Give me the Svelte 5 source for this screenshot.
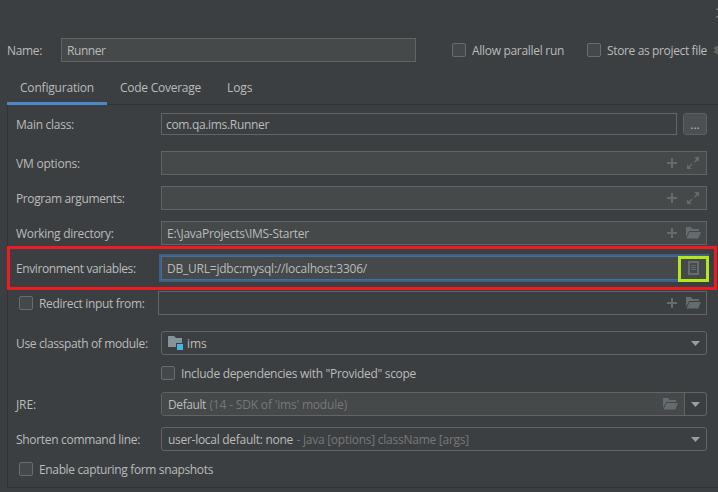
<script>
  // Tracks a label so that it takes exactly the given advance width.
  function fit(node, width) {
    const natural = node.getBoundingClientRect().width;
    node.style.letterSpacing = `${(width - natural) / node.textContent.length}px`;
  }
</script>

{#snippet t(text, width, cls = '')}<span class="t {cls}" use:fit={width}>{text}</span>{/snippet}

{#snippet plus()}
  <svg class="plus" width="10" height="10" viewBox="0 0 10 10"><path d="M4 0h2v4h4v2H6v4H4V6H0V4h4z" /></svg>
{/snippet}

{#snippet expand()}
  <svg class="expand" width="12" height="12" viewBox="0 0 12 12"><path d="M7.2 0H12v4.8L10.4 3.2 7.8 5.8l-.9-.9L9.3 2.1zM0 7.2l2.1 2.1L4.6 6.6l.9.9-2.6 2.9L4.8 12H0z" /></svg>
{/snippet}

{#snippet folder()}
  <svg class="folder" width="15" height="12" viewBox="0 0 15 12"><path d="M0 0h5l1.5 2H13v2H3.2L0 10z" /><path d="M3.5 5H15l-2.7 6.5H.5z" /></svg>
{/snippet}

{#snippet arrow()}
  <svg class="arrow" width="9" height="5" viewBox="0 0 9 5"><path d="M0 0h9L4.5 5z" /></svg>
{/snippet}

<div class="window">
  <svg class="close" width="2" height="10" viewBox="0 0 2 10"><path d="M.3 .5L2 2.3M.3 9.5L2 7.7" /></svg>

  <div class="head">
    <div class="name">{@render t('Name:', 35)}</div>
    <div class="field name-field">{@render t('Runner', 38.5)}</div>
    <div class="check allow"><i></i>{@render t('Allow parallel run', 92)}</div>
    <div class="check store"><i></i>{@render t('Store as project file', 100)}</div>
    <svg class="gear" width="4" height="8" viewBox="0 0 4 8"><path d="M0 1h2V0h2v8H2V7H0V5h1V3H0z" /></svg>
  </div>

  <div class="tabs">
    <div class="tab active">{@render t('Configuration', 74)}</div>
    <div class="tab">{@render t('Code Coverage', 81)}</div>
    <div class="tab">{@render t('Logs', 25.5)}</div>
  </div>

  <div class="panel">
    <div class="row main">
      <div class="label">{@render t('Main class:', 58)}</div>
      <div class="field dark">{@render t('com.qa.ims.Runner', 103)}</div>
      <div class="more"><span>...</span></div>
    </div>
    <div class="row first">
      <div class="label">{@render t('VM options:', 64)}</div>
      <div class="field">{@render plus()}{@render expand()}</div>
    </div>
    <div class="row">
      <div class="label">{@render t('Program arguments:', 108.5)}</div>
      <div class="field">{@render plus()}{@render expand()}</div>
    </div>
    <div class="row">
      <div class="label">{@render t('Working directory:', 97.5)}</div>
      <div class="field">{@render t('E:\\JavaProjects\\IMS-Starter', 142)}{@render plus()}{@render folder()}</div>
    </div>
    <div class="row env">
      <div class="label">{@render t('Environment variables:', 119.7)}</div>
      <div class="field focus">
        {@render t('DB_URL=jdbc:mysql://localhost:3306/', 200)}
        <svg class="list" width="11" height="14" viewBox="0 0 11 14"><path fill-rule="evenodd" d="M0 0h11v14H0zM2 2v10h7V2z" /><path d="M3 4h5v1H3zM3 6h5v1H3zM3 8h5v1H3z" /></svg>
      </div>
      <div class="mark red"></div>
      <div class="mark green"></div>
    </div>
    <div class="row">
      <div class="check redirect"><i></i>{@render t('Redirect input from:', 105.5)}</div>
      <div class="field dark">{@render plus()}{@render folder()}</div>
    </div>
    <div class="row first">
      <div class="label">{@render t('Use classpath of module:', 131.7)}</div>
      <div class="combo">
        <svg class="module" width="16" height="14" viewBox="0 0 16 14"><path fill="#87939a" d="M0 0h6l2 2h6v5H8v4H0z" /><path fill="#40b6e0" d="M9 8h6v6H9z" /></svg>
        {@render t('ims', 19.5)}{@render arrow()}
      </div>
    </div>
    <div class="check include"><i></i>{@render t('Include dependencies with "Provided" scope', 235)}</div>
    <div class="row jre">
      <div class="label">{@render t('JRE:', 20)}</div>
      <div class="combo split">
        <div class="value">{@render t('Default', 38)}{@render t("(14 - SDK of 'ims' module)", 137.5, 'dim')}{@render folder()}</div>
        {@render arrow()}
      </div>
    </div>
    <div class="row">
      <div class="label">{@render t('Shorten command line:', 124)}</div>
      <div class="combo">{@render t('user-local default: none', 125)}{@render t('- java [options] className [args]', 172.5, 'dim')}{@render arrow()}</div>
    </div>
    <div class="check enable"><i></i>{@render t('Enable capturing form snapshots', 174)}</div>
  </div>
</div>

<style>
  :global(body) { background: #3c3f41; overflow: hidden; }
  .window {
    position: relative;
    box-sizing: border-box;
    width: 718px;
    height: 492px;
    padding-top: 38px;
    overflow: hidden;
    background: #3c3f41;
    color: #bbb;
    font: 12px/16px "Open Sans", "Noto Sans", sans-serif;
  }
  .window * { box-sizing: border-box; }
  svg { display: block; flex: none; fill: #656c70; }
  .t { flex: none; white-space: pre; }
  .dim { color: #787878; margin-left: 3.5px; }
  .close { position: absolute; left: 716px; top: 8px; fill: none; stroke: #aaa; }
  .head { display: flex; align-items: center; height: 24px; padding-left: 7px; }
  .name { width: 54px; padding-top: 1px; }
  .field {
    display: flex;
    align-items: center;
    flex: 1;
    height: 24px;
    padding: 1px 13px 0 5px;
    border: 1px solid #646464;
    background: #45494a;
  }
  .name-field { flex: 0 0 355px; }
  .field.dark { background: #3c3f41; }
  .check { display: flex; align-items: center; height: 14px; white-space: nowrap; }
  .check i { flex: none; width: 14px; height: 14px; margin-right: 6px; border: 1px solid #6b6b6b; border-radius: 2px; background: #43494a; }
  .check .t { position: relative; top: 1px; }
  .allow { margin-left: 36px; width: 135px; }
  .store { width: 127px; }
  .gear { fill: #606263; }

  .tabs { display: flex; height: 42px; padding-left: 7px; }
  .tab { height: 43px; padding: 18px 13px 0; z-index: 1; }
  .tab.active { width: 100px; border-bottom: 3px solid #4a88c7; }

  .panel {
    display: flex;
    flex-direction: column;
    width: 712px;
    height: 384px;
    margin-left: 7px;
    padding: 8px 12px 0 8px;
    border: 1px solid #323232;
    border-right: 0;
  }
  .row { display: flex; align-items: center; flex: none; height: 24px; margin-top: 11px; position: relative; }
  .row.main { height: 22px; margin-top: 0; }
  .row.first { margin-top: 16px; }
  .label { width: 145px; flex: none; padding-top: 1px; }
  .main .field { height: 22px; padding-left: 4px; }
  .more {
    width: 24px;
    height: 22px;
    margin-left: 6px;
    border: 1px solid #5e6060;
    border-radius: 3px;
    background: #4c5052;
    text-align: center;
    line-height: 22px;
  }
  .plus { margin-left: auto; margin-right: 9px; }
  .field .expand { margin: 0 -6px 0 1px; }
  .field .folder { margin-right: -8px; }
  .plus, .expand, .folder { position: relative; top: -1px; }
  .focus { border-color: #466d94; box-shadow: 0 0 0 2px #3d6185; border-radius: 0; }
  .focus .list { margin: 0 -6px 0 auto; position: relative; top: -1px; }
  .mark { position: absolute; border: 3px solid; }
  .mark.red { left: -9px; top: -10px; width: 710px; height: 44px; border-color: #ed1c24; }
  .mark.green { left: 662px; top: 0; width: 31px; height: 26px; border-color: #b5e61d; }
  .redirect { width: 139px; margin-right: 3px; padding-left: 3px; }
  .combo {
    display: flex;
    align-items: center;
    flex: 1;
    height: 24px;
    padding: 0 6px;
    border: 1px solid #646464;
    border-radius: 3px;
  }
  .combo .t { padding-top: 1px; }
  .arrow { margin-left: auto; fill: #9c9fa1; }
  .module { margin-right: 3px; }
  .include { margin: 11px 0 1px 145px; }
  .split { padding-left: 0; }
  .value { display: flex; align-items: center; width: 523px; height: 22px; padding: 0 6px; border-right: 1px solid #646464; border-radius: 2px 0 0 2px; background: #45494a; }
  .value .folder { margin-left: auto; top: 0; }
  .enable { margin: 11px 0 0 3px; }
</style>
